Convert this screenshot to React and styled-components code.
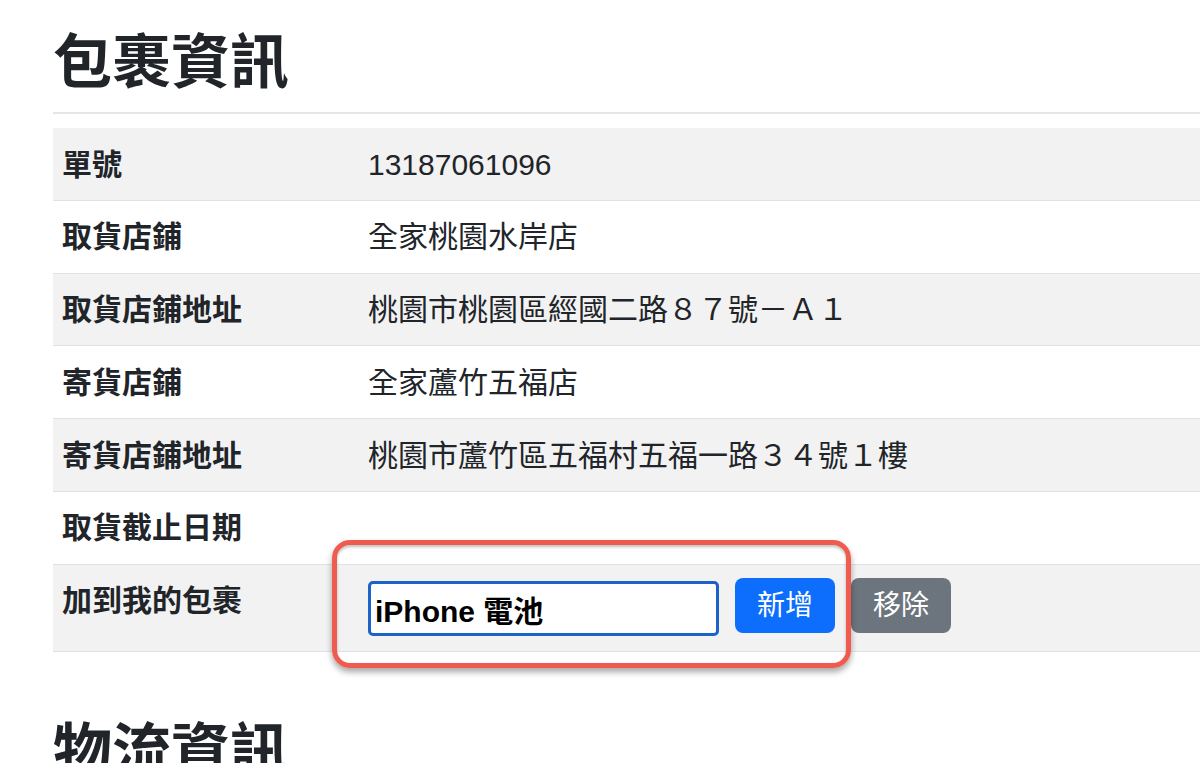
import React from 'react';
import styled, { createGlobalStyle } from 'styled-components';

const GlobalStyle = createGlobalStyle`
  html, body {
    margin: 0;
    padding: 0;
    background: #fff;
    overflow: hidden;
  }
  body {
    font-family: "Liberation Sans", "Noto Sans CJK TC", sans-serif;
    color: #212529;
  }
`;

const Page = styled.div`
  padding: 27px 0 0 53px;
`;

const Heading = styled.h2`
  margin: 0;
  font-size: 59px;
  line-height: 72px;
  font-weight: 700;
  color: #212529;
`;

const Rule = styled.hr`
  margin: 13px 0 14px;
  border: 0;
  border-top: 2px solid #e3e5e8;
`;

const Table = styled.table`
  width: 100%;
  border-collapse: collapse;
  font-size: 30px;
  line-height: 45px;
`;

const Row = styled.tr`
  background: ${(p) => (p.$striped ? '#f2f2f2' : '#fff')};
  border-bottom: 1px solid #dee2e6;
`;

const Label = styled.th`
  width: 288px;
  padding: 13.5px 9px 13.25px;
  text-align: left;
  vertical-align: top;
  font-weight: 700;
`;

const Value = styled.td`
  padding: 13.5px 9px 13.25px;
  vertical-align: top;
`;

const Form = styled.div`
  position: relative;
  display: flex;
  align-items: flex-start;
  gap: 16px;
  padding-bottom: 2px;
`;

const Input = styled.input`
  box-sizing: border-box;
  width: 351px;
  height: 55px;
  margin-top: 3px;
  padding: 0 4px;
  border: 3px solid #1c62c9;
  border-radius: 5px;
  font-family: "Liberation Sans", "Noto Sans CJK TC", sans-serif;
  font-size: 30px;
  font-weight: 700;
  color: #000;
  background: #fff;
  outline: none;
`;

const Button = styled.button`
  box-sizing: border-box;
  width: 100px;
  height: 55px;
  border: 0;
  border-radius: 8px;
  background: ${(p) => (p.$variant === 'secondary' ? '#6c757d' : '#0d6efd')};
  color: #fff;
  font-family: "Liberation Sans", "Noto Sans CJK TC", sans-serif;
  font-size: 28px;
  line-height: 1;
  padding: 0;
`;

const Highlight = styled.div`
  position: absolute;
  left: -36px;
  top: -38px;
  width: 519px;
  height: 128px;
  box-sizing: border-box;
  border: 5px solid #ef5b4e;
  border-radius: 18px;
  box-shadow: 0 4px 6px rgba(0, 0, 0, 0.35), inset 0 2px 3px rgba(0, 0, 0, 0.25);
  pointer-events: none;
`;

const NextHeading = styled(Heading)`
  margin-top: 64px;
`;

const rows = [
  ['單號', '13187061096'],
  ['取貨店鋪', '全家桃園水岸店'],
  ['取貨店鋪地址', '桃園市桃園區經國二路８７號－Ａ１'],
  ['寄貨店鋪', '全家蘆竹五福店'],
  ['寄貨店鋪地址', '桃園市蘆竹區五福村五福一路３４號１樓'],
  ['取貨截止日期', ''],
];

const App = () => (
  <Page>
    <GlobalStyle />
    <Heading>包裹資訊</Heading>
    <Rule />
    <Table>
      <tbody>
        {rows.map(([label, value], i) => (
          <Row key={label} $striped={i % 2 === 0}>
            <Label>{label}</Label>
            <Value>{value}</Value>
          </Row>
        ))}
        <Row $striped>
          <Label>加到我的包裹</Label>
          <Value>
            <Form>
              <Input defaultValue="iPhone 電池" />
              <Button>新增</Button>
              <Button $variant="secondary">移除</Button>
              <Highlight />
            </Form>
          </Value>
        </Row>
      </tbody>
    </Table>
    <NextHeading>物流資訊</NextHeading>
  </Page>
);

export default App;
